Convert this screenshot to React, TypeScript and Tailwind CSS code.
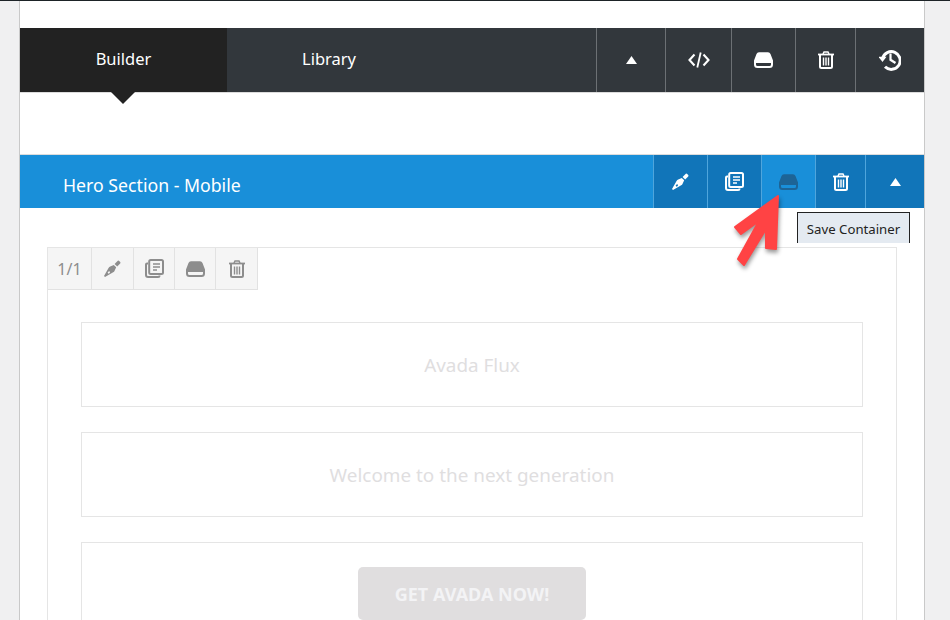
import React from "react";

type P = { className?: string };

const Triangle = ({ className }: P) => (
  <svg width="11" height="8" viewBox="0 0 11 8" className={className} fill="currentColor">
    <path d="M5.5 0 L11 8 H0 Z" />
  </svg>
);

const Code = ({ className }: P) => (
  <svg width="22" height="16" viewBox="0 0 22 16" className={className} fill="none" stroke="currentColor" strokeWidth="2.1">
    <path d="M6.5 2.5 L1.5 8 L6.5 13.5" />
    <path d="M15.5 2.5 L20.5 8 L15.5 13.5" />
    <path d="M12.7 0.5 L9.3 15.5" strokeWidth="1.8" />
  </svg>
);

const Drive = ({ className }: P) => (
  <svg width="19" height="16" viewBox="0 0 19 16" className={className} fill="currentColor">
    <path
      fillRule="evenodd"
      d="M5 0.3 H14 Q15.8 0.3 16.5 2 L19 8.5 V12.5 Q19 16 15.5 16 H3.5 Q0 16 0 12.5 V8.5 L2.5 2 Q3.2 0.3 5 0.3 Z M2 11 V12.5 Q2 14 3.5 14 H15.5 Q17 14 17 12.5 V11 Z"
    />
  </svg>
);

const Trash = ({ className }: P) => (
  <svg width="16" height="18" viewBox="0 0 16 18" className={className} fill="none" stroke="currentColor">
    <path d="M0 3.5 H16" strokeWidth="1.8" />
    <path d="M5 3 L6 1 H10 L11 3" strokeWidth="1.5" />
    <path d="M2 4 V15.5 Q2 17 3.5 17 H12.5 Q14 17 14 15.5 V4" strokeWidth="2" />
    <path d="M5.5 6.5 V14.5 M8 6.5 V14.5 M10.5 6.5 V14.5" strokeWidth="1.4" />
  </svg>
);

const Copy = ({ className }: P) => (
  <svg width="19" height="19" viewBox="0 0 19 19" className={className} fill="none" stroke="currentColor">
    <path d="M3 4.5 H2 Q1 4.5 1 5.5 V16 Q1 18 3 18 H13 Q14.5 18 14.5 16.5" strokeWidth="2" />
    <rect x="4.2" y="1" width="13.8" height="14" rx="1.5" strokeWidth="2" />
    <path d="M8 5 H15 M8 8 H15 M8 11 H12" strokeWidth="1.5" />
  </svg>
);

const Pen = ({ className }: P) => (
  <svg width="17" height="17" viewBox="0 0 17 17" className={className} fill="currentColor">
    <path d="M10.6 4 L13.8 0.8 Q14.5 0.2 15.2 0.9 L16.2 2 Q16.8 2.7 16.2 3.4 L13.2 6.6 Z" />
    <path
      fillRule="evenodd"
      d="M9.8 4.9 L12.2 7.3 L10.6 10.8 Q10.2 11.8 9.2 12.3 L4 15.2 L1 17 L0 16 L1.7 13 L4.7 7.7 Q5.2 6.7 6.2 6.4 Z M4.3 11.8 A0.9 0.9 0 1 0 5.5 13 A0.9 0.9 0 1 0 4.3 11.8 Z"
    />
  </svg>
);

const History = ({ className }: P) => (
  <svg width="22" height="22" viewBox="0 0 22 22" className={className} fill="none" stroke="currentColor">
    <path d="M3.6 9.5 A8.9 8.9 0 1 1 6 17.8" strokeWidth="3" />
    <path d="M-0.5 7.8 H7.5 L3.5 13 Z" fill="currentColor" stroke="none" />
    <path d="M11.5 4.5 V10.8 L16.5 14" strokeWidth="2.2" />
  </svg>
);

const DarkCell = ({ w, children }: { w: string; children: React.ReactNode }) => (
  <div className={`${w} flex items-center justify-center border-l border-[#6c7074] text-white`}>{children}</div>
);

const BlueCell = ({ w, children, hover }: { w: string; children: React.ReactNode; hover?: boolean }) => (
  <div
    className={`${w} flex items-center justify-center border-l border-[#4fa5dc] ${
      hover ? "bg-[#198fd9] text-[#1d6496]" : "bg-[#1175b9] text-white"
    }`}
  >
    {children}
  </div>
);

const ToolCell = ({ w, children }: { w: string; children: React.ReactNode }) => (
  <div className={`${w} flex items-center justify-center border-r border-[#e2e2e2] text-[#8d8d8d]`}>{children}</div>
);

export default function App() {
  return (
    <div
      className="relative h-[620px] w-[950px] overflow-hidden border-t border-[#1d2327] bg-[#f0f0f1] text-white"
      style={{ fontFamily: '"Noto Sans", sans-serif' }}
    >
      <div className="ml-[19px] h-full w-[906px] border-x border-[#c9c9c9] bg-white pt-[27px]">
        {/* Top bar */}
        <div className="relative flex h-[64px] bg-[#32373c]">
          <div className="flex w-[207px] items-center justify-center bg-[#222222] text-[16.5px]">
            <span className="relative -top-px">Builder</span>
          </div>
          <div className="flex w-[204px] items-center justify-center text-[16.5px]">
            <span className="relative -top-px">Library</span>
          </div>
          <div className="ml-auto flex">
            <DarkCell w="w-[69px]"><Triangle /></DarkCell>
            <DarkCell w="w-[66px]"><Code /></DarkCell>
            <DarkCell w="w-[64px]"><Drive /></DarkCell>
            <DarkCell w="w-[60px]"><Trash /></DarkCell>
            <DarkCell w="w-[69px]"><History /></DarkCell>
          </div>
          <div className="absolute left-[91px] top-full h-0 w-0 border-x-[12px] border-t-[12px] border-x-transparent border-t-[#222222]" />
        </div>
        <div className="h-px bg-[#dcdcdc]" />

        {/* Blue section header */}
        <div className="mt-[61px] border-t border-[#dcdcdc]">
          <div className="flex h-[53px] items-stretch bg-[#198fd9]">
            <div className="flex items-center pl-[43px] pt-[8px] text-[17.7px]">Hero Section - Mobile</div>
            <div className="ml-auto flex">
              <BlueCell w="w-[54px]"><Pen /></BlueCell>
              <BlueCell w="w-[54px]"><Copy /></BlueCell>
              <BlueCell w="w-[54px]" hover><Drive /></BlueCell>
              <BlueCell w="w-[50px]"><Trash /></BlueCell>
              <BlueCell w="w-[59px]"><Triangle /></BlueCell>
            </div>
          </div>
        </div>

        {/* Container */}
        <div className="ml-[27px] mt-[39px] h-[400px] w-[850px] border border-[#e5e5e5] bg-white">
          <div className="flex h-[42px] w-[210px] border-b border-[#e2e2e2] bg-[#f5f5f5]">
            <ToolCell w="w-[44px]"><span className="text-[16px]">1/1</span></ToolCell>
            <ToolCell w="w-[42px]"><Pen /></ToolCell>
            <ToolCell w="w-[41px]"><Copy /></ToolCell>
            <ToolCell w="w-[41px]"><Drive /></ToolCell>
            <ToolCell w="w-[42px]"><Trash /></ToolCell>
          </div>
          <div className="flex flex-col gap-[25px] px-[33px] pt-[32px]">
            <div className="flex h-[85px] items-center justify-center border border-[#e5e5e5] pt-[1px] text-[18.9px] text-[#e0dedf]">
              Avada Flux
            </div>
            <div className="flex h-[85px] items-center justify-center border border-[#e5e5e5] pt-[1px] text-[18.9px] text-[#e0dedf]">
              Welcome to the next generation
            </div>
            <div className="flex h-[120px] justify-center border border-[#e5e5e5] pt-[24px]">
              <div className="flex h-[53px] w-[228px] items-center justify-center rounded-[5px] bg-[#e0dedf] pt-[1px] text-[18px] font-bold text-[#f3f3f5]">
                GET AVADA NOW!
              </div>
            </div>
          </div>
        </div>
      </div>

      {/* Tooltip */}
      <div className="absolute left-[797px] top-[211px] flex h-[31px] w-[113px] items-center justify-center border-x border-t border-[#222222] bg-[#e4eaf1] pt-[3px] text-[13.2px] text-[#222222]">
        Save Container
      </div>

      {/* Arrow annotation */}
      <svg
        width="60"
        height="80"
        viewBox="0 0 60 80"
        className="absolute left-[730px] top-[191px] drop-shadow-[1px_3px_2px_rgba(0,0,0,0.4)]"
        fill="#ff4344"
        stroke="#ff4344"
        strokeWidth="2"
        strokeLinejoin="round"
      >
        <path d="M48 4 L5 35 L11 42 L29 29 L8 67 L14 73 L36 37 L36 56 L46 57 Z" />
      </svg>
    </div>
  );
}
